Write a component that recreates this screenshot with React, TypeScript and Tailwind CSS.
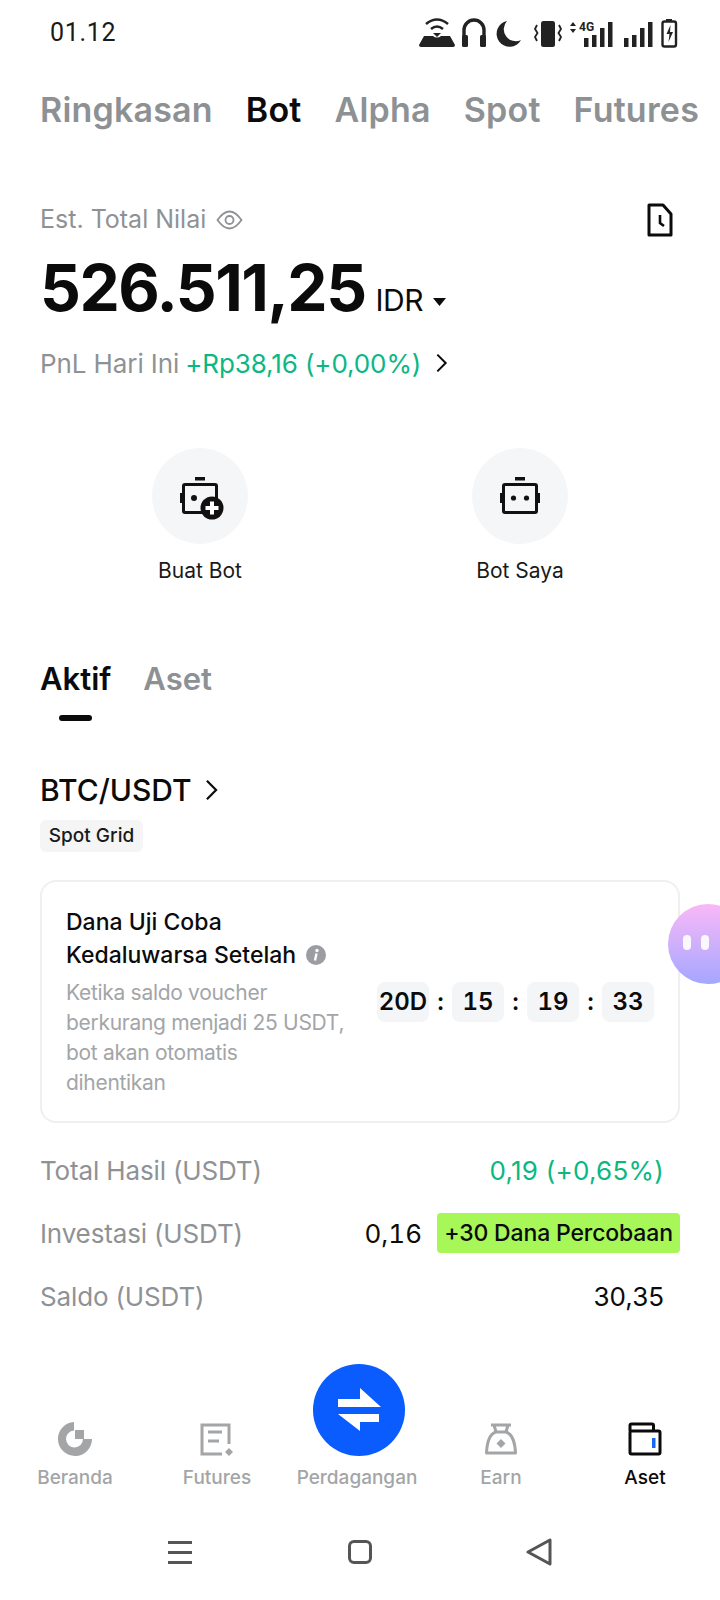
import React from 'react';

const Chevron = ({ className }: { className: string }) => (
  <svg viewBox="0 0 14 24" className={className} fill="none" stroke="#0b0b0b" strokeWidth="2.4">
    <path d="M2 2l10 10L2 22" />
  </svg>
);

const StatusIcons = () => (
  <svg width="270" height="34" viewBox="0 0 270 34" fill="#222">
    {/* hotspot */}
    <path d="M2 30l5-9h9a6 6 0 0 0 8 0h9l5 9q0 2-2 2H4q-2 0-2-2z" />
    <path d="M9 9q11-9 22 0M14 14q6-5 12 0" fill="none" stroke="#222" strokeWidth="2.6" />
    <path d="M20 22l-4-4h8z" />
    {/* headphones */}
    <path d="M47 28V15a10 10 0 0 1 20 0v13" fill="none" stroke="#222" strokeWidth="3.4" />
    <rect x="45" y="20" width="6" height="12" rx="1.500" />
    <rect x="63" y="20" width="6" height="12" rx="1.500" />
    {/* moon */}
    <path d="M90 6a13 13 0 1 0 14 19a12 12 0 0 1-14-19z" />
    {/* vibrate */}
    <rect x="124" y="6" width="14" height="26" rx="2.500" />
    <path d="M120 10l-2 4 2.500 4-2.500 4 2 4M142 10l2 4-2.500 4 2.500 4-2 4" fill="none" stroke="#222" strokeWidth="1.800" />
    {/* 4G arrows + text */}
    <path d="M153 11l3-4 3 4zM153 14l3 4 3-4z" />
    <text x="162" y="16" fontFamily="Roboto, sans-serif" fontSize="12" fontWeight="700" fill="#222">
      4G
    </text>
    <rect x="167" y="23" width="4.500" height="9" />
    <rect x="175" y="20" width="4.500" height="12" />
    <rect x="183" y="13" width="4.500" height="19" />
    <rect x="191" y="7" width="4.500" height="25" />
    {/* second signal */}
    <rect x="207" y="23" width="4.500" height="9" />
    <rect x="215" y="20" width="4.500" height="12" />
    <rect x="223" y="13" width="4.500" height="19" />
    <rect x="231" y="7" width="4.500" height="25" />
    {/* battery */}
    <rect x="249" y="4" width="6" height="3" />
    <rect x="245.500" y="6.500" width="13.500" height="25" rx="2" fill="none" stroke="#222" strokeWidth="2.400" />
    <path d="M253.500 10l-4 9h3l-1 8 4.500-10h-3z" />
  </svg>
);

const BotBody = () => (
  <>
    <rect x="7.500" y="12.500" width="33" height="28" rx="1.500" fill="none" stroke="#111" strokeWidth="3" />
    <rect x="19" y="5" width="10" height="3.500" fill="#111" />
    <rect x="4" y="21" width="2.500" height="10" fill="#111" />
  </>
);

const NavItem = ({ label, active, children }: { label: string; active?: boolean; children: React.ReactNode }) => (
  <div className="flex flex-col items-center justify-end">
    {children}
    <span
      className={`mt-2 h-7 whitespace-nowrap text-[19px] leading-7 font-medium ${active ? 'text-[#0b0b0b]' : 'text-[#a3a5a7]'}`}
    >
      {label}
    </span>
  </div>
);

const StatRow = ({ label, children }: { label: string; children: React.ReactNode }) => (
  <div className="flex h-10 items-center justify-between">
    <span className="text-[26px] tracking-[-0.15px] text-[#8f9295]">{label}</span>
    {children}
  </div>
);

const TimeBox = ({ value }: { value: string }) => (
  <span className="flex h-10 w-[52px] items-center justify-center rounded-lg bg-[#f3f5f7] text-[24px] font-semibold text-[#0b0b0b] tabular-nums">
    {value}
  </span>
);

const Colon = () => <span className="w-[23px] text-center text-[24px] font-semibold text-[#0b0b0b]">:</span>;

export default function App() {
  return (
    <div
      className="relative flex h-[1600px] w-[720px] flex-col overflow-hidden bg-white text-[#0b0b0b]"
      style={{ fontFamily: 'Inter, "Noto Sans", sans-serif' }}
    >
      {/* status bar */}
      <div className="flex h-16 items-center justify-between pr-[33px] pl-[50px]">
        <span className="mt-[2px] text-[25px] tracking-[0.7px] text-[#1a1a1a]" style={{ fontFamily: 'Roboto, sans-serif' }}>
          01.12
        </span>
        <StatusIcons />
      </div>

      {/* top tabs */}
      <div className="mt-[21px] flex h-12 items-center gap-[33px] pl-10 text-[34px] tracking-[0.2px] font-semibold whitespace-nowrap text-[#8e9194]">
        <span>Ringkasan</span>
        <span className="text-[#0b0b0b]">Bot</span>
        <span>Alpha</span>
        <span>Spot</span>
        <span>Futures</span>
      </div>

      {/* total value */}
      <div className="mt-[69px] flex h-9 items-center justify-between pr-[47px] pl-10">
        <div className="flex items-center gap-[10px] text-[25px] text-[#8f9295]">
          <span>Est. Total Nilai</span>
          <svg width="27" height="22" viewBox="0 0 27 22" fill="none" stroke="#8f9295" strokeWidth="1.800">
            <path d="M1.500 11Q13.500-6 25.500 11Q13.500 28 1.500 11z" />
            <circle cx="13.500" cy="11" r="4" />
          </svg>
        </div>
        <svg width="26" height="34" viewBox="0 0 26 34" fill="none" stroke="#0b0b0b" strokeWidth="3">
          <path d="M2 2h14l8 9v21H2z" strokeLinejoin="round" />
          <path d="M13 12v8l4 3" strokeWidth="2.600" />
        </svg>
      </div>
      <div className="mt-3 flex h-[76px] items-end pl-10">
        <span className="text-[64px] leading-[76px] font-bold tracking-[-1.5px]">526.511,25</span>
        <span className="mb-[8px] ml-[10px] text-[30px] leading-9 tracking-[-0.5px]">IDR</span>
        <svg className="mb-[20px] ml-[10px]" width="13" height="8" viewBox="0 0 13 8" fill="#0b0b0b">
          <path d="M0 0h13L6.500 8z" />
        </svg>
      </div>
      <div className="mt-[19px] flex h-9 items-center pl-10 text-[26px] tracking-[-0.1px]">
        <span className="text-[#8f9295]">PnL Hari Ini</span>
        <span className="ml-[6px] text-[#0bb783] tracking-[-0.1px]">+Rp38,16 (+0,00%)</span>
        <Chevron className="ml-[14px] h-[20px] w-[13px]" />
      </div>

      {/* bot actions */}
      <div className="mt-[67px] grid grid-cols-2 px-10">
        <div className="flex flex-col items-center">
          <div className="flex h-24 w-24 items-center justify-center rounded-full bg-[#f4f6f7]">
            <svg width="48" height="48" viewBox="0 0 48 48">
              <BotBody />
              <circle cx="18" cy="26" r="3" fill="#111" />
              <circle cx="36" cy="36" r="11.500" fill="#111" />
              <path d="M36 29.500v13M29.500 36h13" stroke="#fff" strokeWidth="4" />
            </svg>
          </div>
          <span className="mt-3 h-[30px] text-[21px] leading-[30px] text-[#1a1a1a]">Buat Bot</span>
        </div>
        <div className="flex flex-col items-center">
          <div className="flex h-24 w-24 items-center justify-center rounded-full bg-[#f4f6f7]">
            <svg width="48" height="48" viewBox="0 0 48 48">
              <BotBody />
              <rect x="41.500" y="21" width="2.500" height="10" fill="#111" />
              <circle cx="17.500" cy="26" r="2.600" fill="#111" />
              <circle cx="30.500" cy="26" r="2.600" fill="#111" />
            </svg>
          </div>
          <span className="mt-3 h-[30px] text-[21px] leading-[30px] text-[#1a1a1a]">Bot Saya</span>
        </div>
      </div>

      {/* content tabs */}
      <div className="mt-[73px] flex h-10 items-center gap-8 pl-10 text-[31px] font-semibold">
        <span>Aktif</span>
        <span className="text-[#8e9194]">Aset</span>
      </div>
      <div className="mt-4 ml-[59px] h-[6px] w-[33px] rounded-full bg-[#0b0b0b]" />

      {/* position */}
      <div className="mt-[49px] flex h-10 items-center pl-10">
        <span className="text-[30px] font-medium">BTC/USDT</span>
        <Chevron className="ml-[13px] h-[22px] w-[13px]" />
      </div>
      <div className="mt-[10px] ml-10 flex h-8 w-[103px] items-center justify-center rounded-md bg-[#f5f5f5] text-[19px] font-medium text-[#1a1a1a]">
        Spot Grid
      </div>

      {/* trial fund card */}
      <div className="mx-10 mt-[28px] flex h-[243px] items-center justify-between rounded-2xl border-2 border-[#efefef] px-6">
        <div>
          <p className="text-[23px] leading-[33px] font-medium">Dana Uji Coba</p>
          <p className="flex items-center gap-[10px] text-[23px] leading-[33px] font-medium whitespace-nowrap">
            Kedaluwarsa Setelah
            <svg width="20" height="20" viewBox="0 0 20 20">
              <circle cx="10" cy="10" r="10" fill="#9b9da0" />
              <circle cx="11" cy="5.500" r="1.700" fill="#fff" />
              <path d="M10.500 8.500 9 15.500" stroke="#fff" strokeWidth="2.400" />
            </svg>
          </p>
          <p className="mt-[6px] text-[21px] leading-[30px] tracking-[-0.3px] whitespace-nowrap text-[#a3a5a8]">
            Ketika saldo voucher
            <br />
            berkurang menjadi 25 USDT,
            <br />
            bot akan otomatis
            <br />
            dihentikan
          </p>
        </div>
        <div className="flex items-center">
          <TimeBox value="20D" />
          <Colon />
          <TimeBox value="15" />
          <Colon />
          <TimeBox value="19" />
          <Colon />
          <TimeBox value="33" />
        </div>
      </div>

      {/* stats */}
      <div className="mt-[27px] flex flex-col gap-[23px] pr-10 pl-10">
        <StatRow label="Total Hasil (USDT)">
          <span className="mr-4 text-[26px] text-[#0bb783] tracking-[0.25px]">0,19 (+0,65%)</span>
        </StatRow>
        <StatRow label="Investasi (USDT)">
          <div className="flex items-center gap-[15px]">
            <span className="text-[26px] tabular-nums">0,16</span>
            <span className="flex h-10 w-[243px] items-center justify-center rounded bg-[#a7f759] text-[23px] tracking-[-0.15px] font-medium">
              +30 Dana Percobaan
            </span>
          </div>
        </StatRow>
        <StatRow label="Saldo (USDT)">
          <span className="mr-4 text-[26px]">30,35</span>
        </StatRow>
      </div>

      {/* bottom nav */}
      <div className="mt-auto grid grid-cols-[150px_134px_146px_142px_146px]">
        <NavItem label="Beranda">
          <svg width="34" height="34" viewBox="0 0 34 34" fill="#a3a5a7">
            <path d="M16 0A17 17 0 1 0 34 17H25A8.500 8.500 0 1 1 16 8.500z" />
            <rect x="17" y="8" width="9" height="9" />
          </svg>
        </NavItem>
        <NavItem label="Futures">
          <svg width="34" height="34" viewBox="0 0 34 34" fill="none" stroke="#a3a5a7" strokeWidth="3">
            <path d="M29 22V3H2v29h20" />
            <path d="M8 10h14M8 19h11" />
            <path d="M29 26l4 4-4 4-4-4z" fill="#a3a5a7" stroke="none" />
          </svg>
        </NavItem>
        <NavItem label="Perdagangan">
          <div className="ml-1 flex h-[92px] w-[92px] items-center justify-center rounded-full bg-[#0a5cff]">
            <svg width="92" height="92" viewBox="0 0 92 92" fill="#fff">
              <path d="M25 35H47V24L68 43H25z" />
              <path d="M66 50V58H47V67L25 50z" />
            </svg>
          </div>
        </NavItem>
        <NavItem label="Earn">
          <svg width="34" height="34" viewBox="0 0 34 34" fill="none" stroke="#a3a5a7" strokeWidth="3">
            <path d="M7 3H27M10 3l2 7M24 3l-2 7" />
            <path d="M12 10C5 12 3 20 2.500 31H31.500C31 20 29 12 22 10z" strokeLinejoin="round" />
            <path d="M17 17l4.500 4.500L17 26l-4.500-4.500z" fill="#a3a5a7" stroke="none" />
          </svg>
        </NavItem>
        <NavItem label="Aset" active>
          <svg width="34" height="34" viewBox="0 0 34 34" fill="none" stroke="#0b0b0b" strokeWidth="3">
            <path d="M2 9V3.500Q2 2 3.500 2H24Q25.500 2 25.500 3.500V9" />
            <rect x="2" y="9" width="30" height="23" rx="1.500" />
            <rect x="24" y="16" width="3.500" height="10" fill="#1668f0" stroke="none" />
          </svg>
        </NavItem>
      </div>

      {/* android nav */}
      <div className="mt-6 mb-3 flex h-[72px] items-center pl-[168px]">
        <div className="flex w-6 flex-col gap-[7px]">
          <div className="h-[3px] bg-[#555]" />
          <div className="h-[3px] bg-[#555]" />
          <div className="h-[3px] bg-[#555]" />
        </div>
        <div className="ml-[156px] h-6 w-6 rounded-md border-[3px] border-[#555]" />
        <svg className="ml-[154px]" width="26" height="28" viewBox="0 0 26 28" fill="none" stroke="#555" strokeWidth="3">
          <path d="M2 14L24 2V26z" strokeLinejoin="round" />
        </svg>
      </div>

      {/* floating assistant */}
      <div className="absolute top-[904px] left-[668px] h-20 w-20 rounded-full bg-gradient-to-b from-[#f9b8f7] to-[#a4a6ff]">
        <div className="mt-[31px] ml-[15px] flex gap-[10px]">
          <div className="h-[15px] w-2 rounded-full bg-white/90" />
          <div className="h-[15px] w-2 rounded-full bg-white/90" />
        </div>
      </div>
    </div>
  );
}
